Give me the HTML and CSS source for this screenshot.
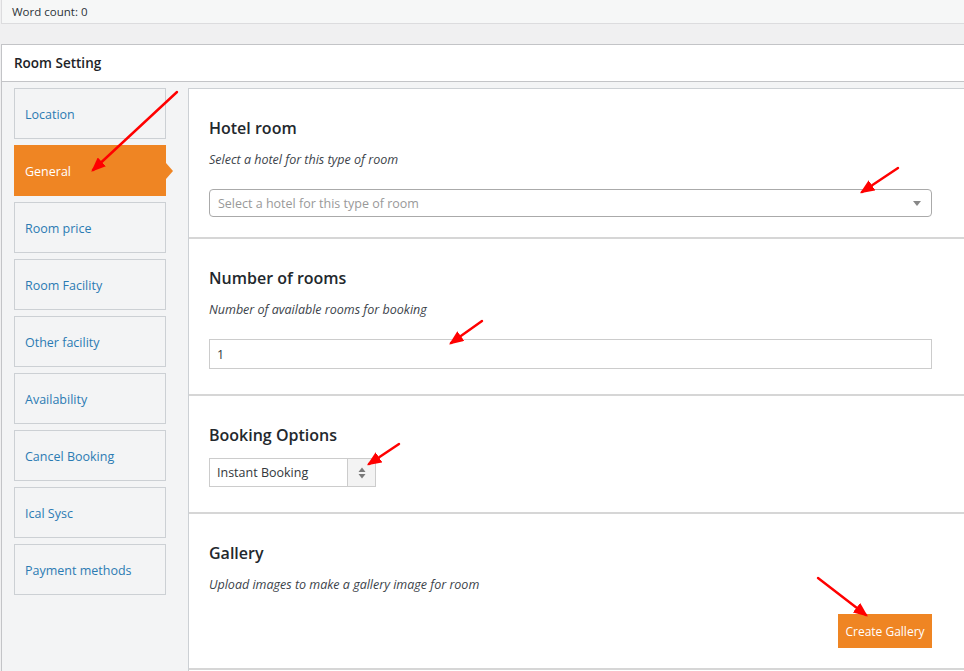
FILE: index.html
```html
<!DOCTYPE html>
<html lang="en">
<head>
    <meta charset="UTF-8">
    <meta name="viewport" content="width=device-width, initial-scale=1.0">
    <title>Room Setting</title>
    <link rel="stylesheet" href="styles.css">
</head>
<body>
    <div class="word-count">Word count: 0</div>

    <div class="postbox">
        <h2 class="postbox-title">Room Setting</h2>
        <div class="inside">
            <ul class="tabs">
                <li class="tab">Location</li>
                <li class="tab active">General</li>
                <li class="tab">Room price</li>
                <li class="tab">Room Facility</li>
                <li class="tab">Other facility</li>
                <li class="tab">Availability</li>
                <li class="tab">Cancel Booking</li>
                <li class="tab">Ical Sysc</li>
                <li class="tab">Payment methods</li>
            </ul>

            <div class="panel">
                <div class="field-group">
                    <h3>Hotel room</h3>
                    <p class="desc">Select a hotel for this type of room</p>
                    <div class="select-box">
                        <span class="placeholder">Select a hotel for this type of room</span>
                        <span class="caret"></span>
                    </div>
                </div>

                <div class="field-group tall">
                    <h3>Number of rooms</h3>
                    <p class="desc">Number of available rooms for booking</p>
                    <input type="text" class="text-input" value="1">
                </div>

                <div class="field-group tall">
                    <h3>Booking Options</h3>
                    <div class="booking-select">
                        <span class="booking-value">Instant Booking</span>
                        <span class="spinner">
                            <svg width="8" height="12" viewBox="0 0 8 12">
                                <path d="M4 0.5 L7.5 5 H0.5 Z" fill="#7a7a7a"/>
                                <path d="M4 11.5 L7.5 7 H0.5 Z" fill="#7a7a7a"/>
                            </svg>
                        </span>
                    </div>
                </div>

                <div class="field-group">
                    <h3>Gallery</h3>
                    <p class="desc">Upload images to make a gallery image for room</p>
                    <div class="actions">
                        <button class="btn-orange">Create Gallery</button>
                    </div>
                </div>
            </div>
        </div>
    </div>

    <!-- red annotation arrows drawn over the screenshot -->
    <svg class="annotations" width="964" height="671" viewBox="0 0 964 671">
        <defs>
            <marker id="head" markerWidth="6" markerHeight="5" refX="5" refY="2.5" orient="auto" markerUnits="strokeWidth">
                <path d="M0 0 L6 2.5 L0 5 Z" fill="#f00"/>
            </marker>
        </defs>
        <g stroke="#f00" stroke-width="2.4" stroke-linecap="round" marker-end="url(#head)">
            <line x1="177" y1="92" x2="93" y2="170"/>
            <line x1="898" y1="168" x2="862" y2="192"/>
            <line x1="482" y1="321" x2="451" y2="343"/>
            <line x1="399" y1="444" x2="369" y2="464"/>
            <line x1="818" y1="578" x2="866" y2="615"/>
        </g>
    </svg>
</body>
</html>
```

FILE: styles.css
```css
* {
    margin: 0;
    padding: 0;
    box-sizing: border-box;
}
body {
    position: relative;
    background: #f0f0f1;
    font-family: "Open Sans", "Noto Sans", sans-serif;
    color: #1d2327;
    padding-left: 1px;
    overflow: hidden;
    height: 671px;
}
.word-count {
    height: 24px;
    line-height: 23px;
    padding-left: 10px;
    font-size: 11.5px;
    color: #2c3338;
    background: #f6f7f7;
    border: 1px solid #dcdcde;
    border-top: none;
    border-right: none;
}
.postbox {
    margin-top: 20px;
    background: #fff;
    border: 1px solid #c3c4c7;
    border-right: none;
}
.postbox-title {
    height: 37px;
    line-height: 36px;
    padding-left: 12px;
    font-size: 13.5px;
    font-weight: 600;
    border-bottom: 1px solid #c3c4c7;
}
.inside {
    display: flex;
    align-items: flex-start;
    background: #f3f4f5;
    padding-top: 6px;
    height: 600px;
}
.tabs {
    list-style: none;
    width: 186px;
    padding-left: 12px;
    display: flex;
    flex-direction: column;
    gap: 6px;
}
.tab {
    position: relative;
    width: 152px;
    height: 51px;
    line-height: 49px;
    padding: 1px 0 0 10px;
    font-size: 12.5px;
    color: #2b7bb3;
    border: 1px solid #ccd0d4;
}
.tab.active {
    background: #ef8523;
    border-color: #ef8523;
    color: #fff;
}
.tab.active::after {
    content: "";
    position: absolute;
    right: -8px;
    top: 17px;
    border-left: 7px solid #ef8523;
    border-top: 8px solid transparent;
    border-bottom: 8px solid transparent;
}
.panel {
    flex: 1;
    background: #fff;
    border-top: 1px solid #ccd0d4;
    border-left: 1px solid #ccd0d4;
    height: 600px;
}
.field-group {
    padding: 27px 20px 20px;
    border-bottom: 2px solid #d6d6d6;
}
.field-group.tall {
    padding-bottom: 25px;
}
.field-group h3 {
    font-size: 16px;
    font-weight: 600;
    line-height: 24px;
    color: #23282d;
}
.desc {
    margin-top: 10px;
    font-size: 12.5px;
    font-style: italic;
    line-height: 20px;
    color: #3c434a;
}
.select-box {
    margin-top: 19px;
    width: 723px;
    height: 28px;
    border: 1px solid #aaa;
    border-radius: 4px;
    display: flex;
    align-items: center;
    justify-content: space-between;
    padding: 0 8px;
}
.placeholder {
    font-size: 12.5px;
    color: #999;
}
.caret {
    border-top: 5px solid #888;
    border-left: 4px solid transparent;
    border-right: 4px solid transparent;
    margin-right: 2px;
}
.text-input {
    display: block;
    margin-top: 19px;
    width: 723px;
    height: 30px;
    border: 1px solid #ccc;
    padding: 0 7px;
    font-family: inherit;
    font-size: 12.5px;
    color: #32373c;
    outline: none;
}
.booking-select {
    margin-top: 11px;
    width: 167px;
    height: 29px;
    border: 1px solid #ccc;
    display: flex;
}
.booking-value {
    flex: 1;
    line-height: 27px;
    padding-left: 7px;
    font-size: 12.5px;
    color: #32373c;
}
.spinner {
    width: 28px;
    background: #f3f3f3;
    border-left: 1px solid #ccc;
    display: flex;
    align-items: center;
    justify-content: center;
}
.actions {
    margin-top: 19px;
    width: 723px;
    display: flex;
    justify-content: flex-end;
}
.btn-orange {
    width: 94px;
    height: 34px;
    border: none;
    background: #ef8523;
    color: #fff;
    font-family: inherit;
    font-size: 12px;
    cursor: pointer;
}
.annotations {
    position: absolute;
    left: 0;
    top: 0;
    pointer-events: none;
}
```
